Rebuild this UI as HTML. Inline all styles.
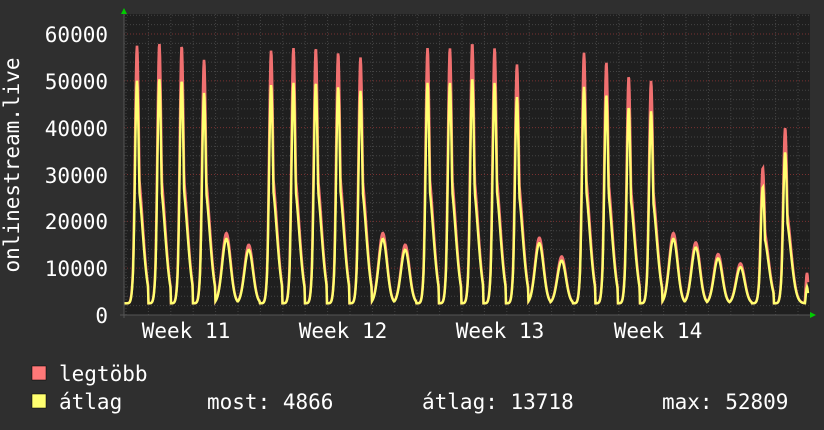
<!DOCTYPE html>
<html><head><meta charset="utf-8"><style>
html,body{margin:0;padding:0;background:#2f2f2f;width:824px;height:430px;overflow:hidden}
svg{display:block}
text{font-family:"DejaVu Sans Mono","Liberation Mono",monospace;fill:#fff;font-size:21px}
</style></head><body>
<svg id="s" width="824" height="430" xmlns="http://www.w3.org/2000/svg">
<rect x="0" y="0" width="824" height="430" fill="#2f2f2f"/>
<rect x="124" y="14" width="686" height="301" fill="#1f1f1f"/>
<g id="grid"></g>
<path id="mx" fill="none" stroke="#f07070" stroke-width="2.6"/>
<path id="av" fill="none" stroke="#ffff70" stroke-width="2.4"/>
<line x1="124" y1="10" x2="124" y2="318" stroke="#555" stroke-width="1"/>
<line x1="120" y1="315" x2="814" y2="315" stroke="#555" stroke-width="1"/>
<polygon points="121,14 127,14 124,8" fill="#00cc00"/>
<polygon points="810,312 810,318 816,315" fill="#00cc00"/>
<g text-anchor="end">
<text x="108" y="42">60000</text>
<text x="108" y="89">50000</text>
<text x="108" y="136">40000</text>
<text x="108" y="183">30000</text>
<text x="108" y="229">20000</text>
<text x="108" y="276">10000</text>
<text x="108" y="323">0</text>
</g>
<text transform="translate(19,165) rotate(-90)" text-anchor="middle">onlinestream.live</text>
<g text-anchor="middle">
<text x="186" y="338">Week 11</text>
<text x="343" y="338">Week 12</text>
<text x="500" y="338">Week 13</text>
<text x="658" y="338">Week 14</text>
</g>
<rect x="32" y="366" width="14" height="14" fill="#ff7878" stroke="#000" stroke-width="0.5"/>
<rect x="32" y="394" width="14" height="14" fill="#ffff70" stroke="#000" stroke-width="0.5"/>
<text x="59" y="381">legtöbb</text>
<text x="59" y="409">átlag</text>
<text x="207" y="409">most: 4866</text>
<text x="422" y="409">átlag: 13718</text>
<text x="662" y="409">max: 52809</text>
</svg>
<script>
var ns="http://www.w3.org/2000/svg",g=document.getElementById('grid');
function ln(x1,y1,x2,y2,c){var l=document.createElementNS(ns,'line');l.setAttribute('x1',x1);l.setAttribute('y1',y1);l.setAttribute('x2',x2);l.setAttribute('y2',y2);l.setAttribute('stroke',c);l.setAttribute('stroke-width',1);l.setAttribute('stroke-dasharray','1,2');g.appendChild(l);}
var Y=function(v){return 315-v*(281/60000);};
for(var v=2000;v<=64000;v+=2000){ln(124,Y(v),810,Y(v),v%10000==0?'#7a3030':'#444');}
for(var x=126;x<810;x+=22.4){ln(x,14,x,315,'#444');}
var peaks=[57500,58000,57500,54500,17500,15000,56500,57000,57000,56000,55000,17500,15000,57000,57000,58000,57000,53500,16500,12500,56000,54000,51000,50000,17500,15500,13000,11000,31500,40000];
var mx="",av="";
for(var px=124;px<=808;px+=0.5){
 var d=Math.round((px-137)/22.35);if(d<0)d=0;if(d>29)d=29;
 var c=137+d*22.35,dx=px-c,p=peaks[d];
 var big=p>30000,vm,va;
 if(big){
  var sp=Math.exp(-dx*dx/(2*2.0*2.0));
  var br=dx<0?Math.exp(-dx*dx/(2*2.4*2.4)):Math.exp(-dx*dx/(2*5.5*5.5));
  var bb=Math.min(29000,p*0.52);
  vm=2500+Math.max((p-2500)*sp,(bb)*br);
  va=2500+Math.max((p*0.87-2500)*sp,(bb*0.9)*br);
 }else{
  var br2=Math.exp(-dx*dx/(2*4.2*4.2));
  vm=2500+(p-2500)*br2;va=2500+(p*0.93-2500)*br2;
 }
 if(px>802){vm=Math.max(vm,9000*Math.exp(-(px-807)*(px-807)/4));va=Math.max(va,6000*Math.exp(-(px-807)*(px-807)/4));}
 mx+=(px==124?"M":"L")+px+","+Y(vm).toFixed(1);
 av+=(px==124?"M":"L")+px+","+Y(va).toFixed(1);
}
document.getElementById('mx').setAttribute('d',mx);
document.getElementById('av').setAttribute('d',av);
</script>
</body></html>
